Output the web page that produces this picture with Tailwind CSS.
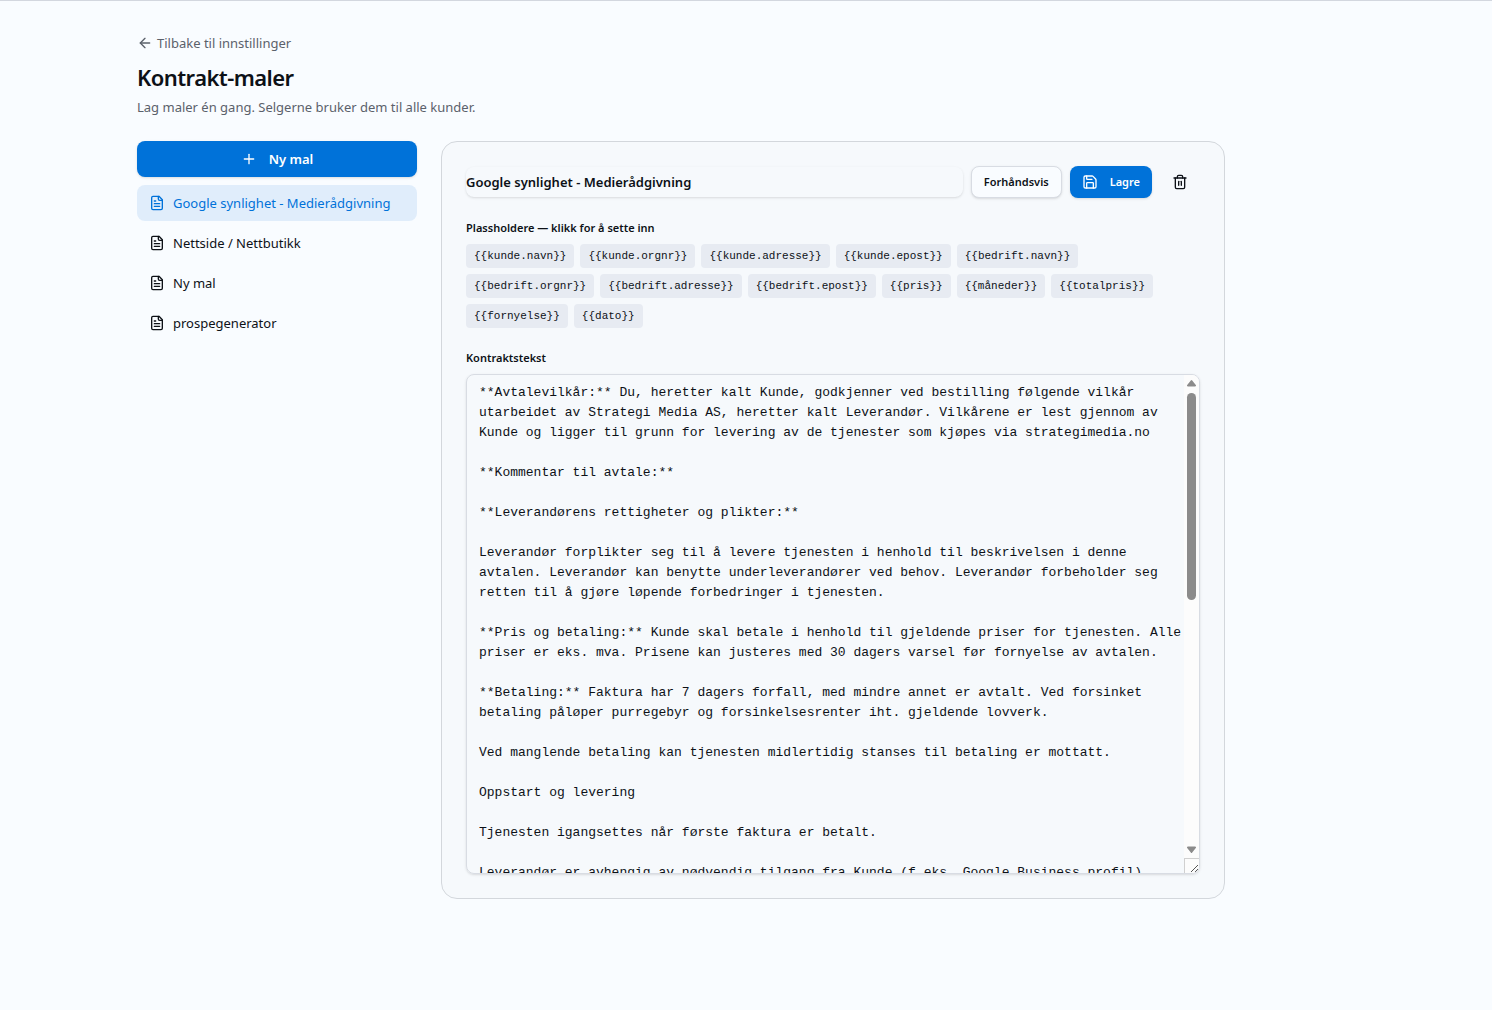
<!DOCTYPE html>
<html lang="no">
<head>
    <meta charset="UTF-8">
    <meta name="viewport" content="width=device-width, initial-scale=1.0">
    <title>Kontrakt-maler</title>
    <script src="https://cdn.jsdelivr.net/npm/@tailwindcss/browser@4"></script>
</head>
<body class="min-h-screen border-t border-[#d3d7df] bg-[#f9fcff] font-['Noto_Sans','Open_Sans',sans-serif] text-[13px] leading-5 text-[#0d1117] lg:pr-[130px]">

    <!-- shared icon shapes -->
    <svg class="hidden" aria-hidden="true">
        <symbol id="icon-file" viewBox="0 0 24 24" fill="none" stroke="currentColor" stroke-width="2" stroke-linecap="round" stroke-linejoin="round">
            <path d="M15 2H6a2 2 0 0 0-2 2v16a2 2 0 0 0 2 2h12a2 2 0 0 0 2-2V7Z" />
            <path d="M14 2v4a2 2 0 0 0 2 2h4" />
            <path d="M10 9H8" />
            <path d="M16 13H8" />
            <path d="M16 17H8" />
        </symbol>
    </svg>

    <div class="mx-auto max-w-6xl p-8">

        <header class="mb-6">
            <a href="#" class="inline-flex items-center gap-1 align-top text-[#5b616b] hover:text-[#0d1117]">
                <svg class="size-4" viewBox="0 0 24 24" fill="none" stroke="currentColor" stroke-width="2" stroke-linecap="round" stroke-linejoin="round">
                    <path d="m12 19-7-7 7-7" />
                    <path d="M19 12H5" />
                </svg>
                Tilbake til innstillinger
            </a>
            <h1 class="mt-2 text-[22px] leading-8 font-semibold tracking-tight">Kontrakt-maler</h1>
            <p class="mt-1 text-[#5b616b]">Lag maler én gang. Selgerne bruker dem til alle kunder.</p>
        </header>

        <div class="grid gap-6 md:grid-cols-[280px_1fr]">

            <!-- template list -->
            <aside class="flex flex-col gap-2">
                <button type="button" class="flex h-9 items-center justify-center gap-3 rounded-lg bg-[#0072d9] font-semibold text-white shadow-sm hover:bg-[#0064c0]">
                    <svg class="size-4" viewBox="0 0 24 24" fill="none" stroke="currentColor" stroke-width="2" stroke-linecap="round" stroke-linejoin="round">
                        <path d="M5 12h14" />
                        <path d="M12 5v14" />
                    </svg>
                    Ny mal
                </button>
                <nav class="flex flex-col gap-1">
                    <button type="button" class="flex h-9 items-center gap-2 rounded-lg bg-[#e0edfb] px-3 text-[#0072d9]">
                        <svg class="size-4"><use href="#icon-file" /></svg>
                        Google synlighet - Medierådgivning
                    </button>
                    <button type="button" class="flex h-9 items-center gap-2 rounded-lg px-3 hover:bg-[#e7ebf2]">
                        <svg class="size-4"><use href="#icon-file" /></svg>
                        Nettside / Nettbutikk
                    </button>
                    <button type="button" class="flex h-9 items-center gap-2 rounded-lg px-3 hover:bg-[#e7ebf2]">
                        <svg class="size-4"><use href="#icon-file" /></svg>
                        Ny mal
                    </button>
                    <button type="button" class="flex h-9 items-center gap-2 rounded-lg px-3 hover:bg-[#e7ebf2]">
                        <svg class="size-4"><use href="#icon-file" /></svg>
                        prospegenerator
                    </button>
                </nav>
            </aside>

            <!-- editor -->
            <main class="min-w-0 rounded-2xl border border-[#d3d7dc] bg-[#f6f9fc] p-6">
                <div class="mb-[22px] flex items-center gap-2">
                    <input type="text" aria-label="Navn på mal" value="Google synlighet - Medierådgivning" class="h-[30px] min-w-0 flex-1 rounded-lg font-semibold shadow-sm outline-none">
                    <button type="button" class="h-8 rounded-lg border border-[#d8dce3] bg-[#f9fcff] px-3 text-[11px] font-semibold shadow-sm">Forhåndsvis</button>
                    <button type="button" class="flex h-8 items-center gap-3 rounded-lg bg-[#0072d9] px-3 text-[11px] font-semibold text-white shadow-sm hover:bg-[#0064c0]">
                        <svg class="size-4" viewBox="0 0 24 24" fill="none" stroke="currentColor" stroke-width="2" stroke-linecap="round" stroke-linejoin="round">
                            <path d="M15.2 3a2 2 0 0 1 1.4.6l3.8 3.8a2 2 0 0 1 .6 1.4V19a2 2 0 0 1-2 2H5a2 2 0 0 1-2-2V5a2 2 0 0 1 2-2z" />
                            <path d="M17 21v-7a1 1 0 0 0-1-1H8a1 1 0 0 0-1 1v7" />
                            <path d="M7 3v4a1 1 0 0 0 1 1h7" />
                        </svg>
                        Lagre
                    </button>
                    <button type="button" aria-label="Slett mal" class="grid h-8 w-10 place-items-center rounded-lg hover:bg-[#e7ebf2]">
                        <svg class="size-4" viewBox="0 0 24 24" fill="none" stroke="currentColor" stroke-width="2" stroke-linecap="round" stroke-linejoin="round">
                            <path d="M3 6h18" />
                            <path d="M19 6v14a2 2 0 0 1-2 2H7a2 2 0 0 1-2-2V6" />
                            <path d="M8 6V4a2 2 0 0 1 2-2h4a2 2 0 0 1 2 2v2" />
                            <path d="M10 11v6" />
                            <path d="M14 11v6" />
                        </svg>
                    </button>
                </div>

                <h2 class="mb-2 text-[11px] leading-4 font-semibold">Plassholdere — klikk for å sette inn</h2>
                <div class="mb-[22px] flex flex-wrap gap-[6px] font-['Liberation_Mono',monospace] text-[11px] leading-4
                    [&>button]:rounded
                    [&>button]:bg-[#e7ebf2]
                    [&>button]:px-2
                    [&>button]:py-1
                ">
                    <button type="button">{{kunde.navn}}</button>
                    <button type="button">{{kunde.orgnr}}</button>
                    <button type="button">{{kunde.adresse}}</button>
                    <button type="button">{{kunde.epost}}</button>
                    <button type="button">{{bedrift.navn}}</button>
                    <button type="button">{{bedrift.orgnr}}</button>
                    <button type="button">{{bedrift.adresse}}</button>
                    <button type="button">{{bedrift.epost}}</button>
                    <button type="button">{{pris}}</button>
                    <button type="button">{{måneder}}</button>
                    <button type="button">{{totalpris}}</button>
                    <button type="button">{{fornyelse}}</button>
                    <button type="button">{{dato}}</button>
                </div>

                <label for="contract-text" class="mb-2 block text-[11px] leading-4 font-semibold">Kontraktstekst</label>
                <div class="relative overflow-hidden rounded-lg border border-[#d8dce3] shadow-sm">
                    <textarea id="contract-text" spellcheck="false" class="block h-[498px] w-full resize-none overflow-y-scroll py-2 pr-4 pl-3 font-['Liberation_Mono',monospace] text-[13px] leading-5 outline-none [scrollbar-width:none]">**Avtalevilkår:** Du, heretter kalt Kunde, godkjenner ved bestilling følgende vilkår utarbeidet av Strategi Media AS, heretter kalt Leverandør. Vilkårene er lest gjennom av Kunde og ligger til grunn for levering av de tjenester som kjøpes via strategimedia.no

**Kommentar til avtale:**

**Leverandørens rettigheter og plikter:**

Leverandør forplikter seg til å levere tjenesten i henhold til beskrivelsen i denne avtalen. Leverandør kan benytte underleverandører ved behov. Leverandør forbeholder seg retten til å gjøre løpende forbedringer i tjenesten.

**Pris og betaling:** Kunde skal betale i henhold til gjeldende priser for tjenesten. Alle priser er eks. mva. Prisene kan justeres med 30 dagers varsel før fornyelse av avtalen.

**Betaling:** Faktura har 7 dagers forfall, med mindre annet er avtalt. Ved forsinket betaling påløper purregebyr og forsinkelsesrenter iht. gjeldende lovverk.

Ved manglende betaling kan tjenesten midlertidig stanses til betaling er mottatt.

Oppstart og levering

Tjenesten igangsettes når første faktura er betalt.

Leverandør er avhengig av nødvendig tilgang fra Kunde (f.eks. Google Business profil)
for å kunne levere tjenesten.

Kundens ansvar

Kunde er ansvarlig for at opplysninger som gis til Leverandør er korrekte.

Kunde skal varsle Leverandør om endringer som påvirker leveransen.

Avtaleperiode

Avtalen gjelder i {{måneder}} måneder fra {{dato}}.

Avtalen fornyes slik: {{fornyelse}}.

Oppsigelse

Oppsigelse skal skje skriftlig til {{bedrift.epost}}.

Ansvarsbegrensning

Leverandør er ikke ansvarlig for indirekte tap.

Totalpris for avtalen er {{totalpris}}.

Tvister søkes løst i minnelighet.</textarea>

                    <!-- scroll track, thumb and resize grip -->
                    <div aria-hidden="true" class="absolute inset-y-0 right-0 flex w-[15px] flex-col items-center bg-[#fcfcfc] text-[#8b8b8b]">
                        <svg class="mt-1 h-2 w-[9px] shrink-0" viewBox="0 0 9 8" fill="currentColor"><path d="M3.800 1.400Q4.500.4 5.200 1.400L9 6.200Q9.200 7.500 8 7.500H1Q-.2 7.500 0 6.200Z" /></svg>
                        <div class="mt-[6px] h-[207px] w-[9px] rounded-full bg-[#8b8b8b]"></div>
                        <svg class="mt-auto mb-1 h-2 w-[9px] shrink-0" viewBox="0 0 9 8" fill="currentColor"><path d="M3.800 6.600Q4.500 7.600 5.200 6.600L9 1.800Q9.200.5 8 .5H1Q-.2.5 0 1.800Z" /></svg>
                        <svg class="size-[15px] shrink-0 border-t border-l border-[#d0d0d0]" viewBox="0 0 14 14" fill="none" stroke="#555" stroke-width="1"><path d="M6 13 13 6M10 13l3-3" /></svg>
                    </div>
                </div>
            </main>
        </div>
    </div>
</body>
</html>
